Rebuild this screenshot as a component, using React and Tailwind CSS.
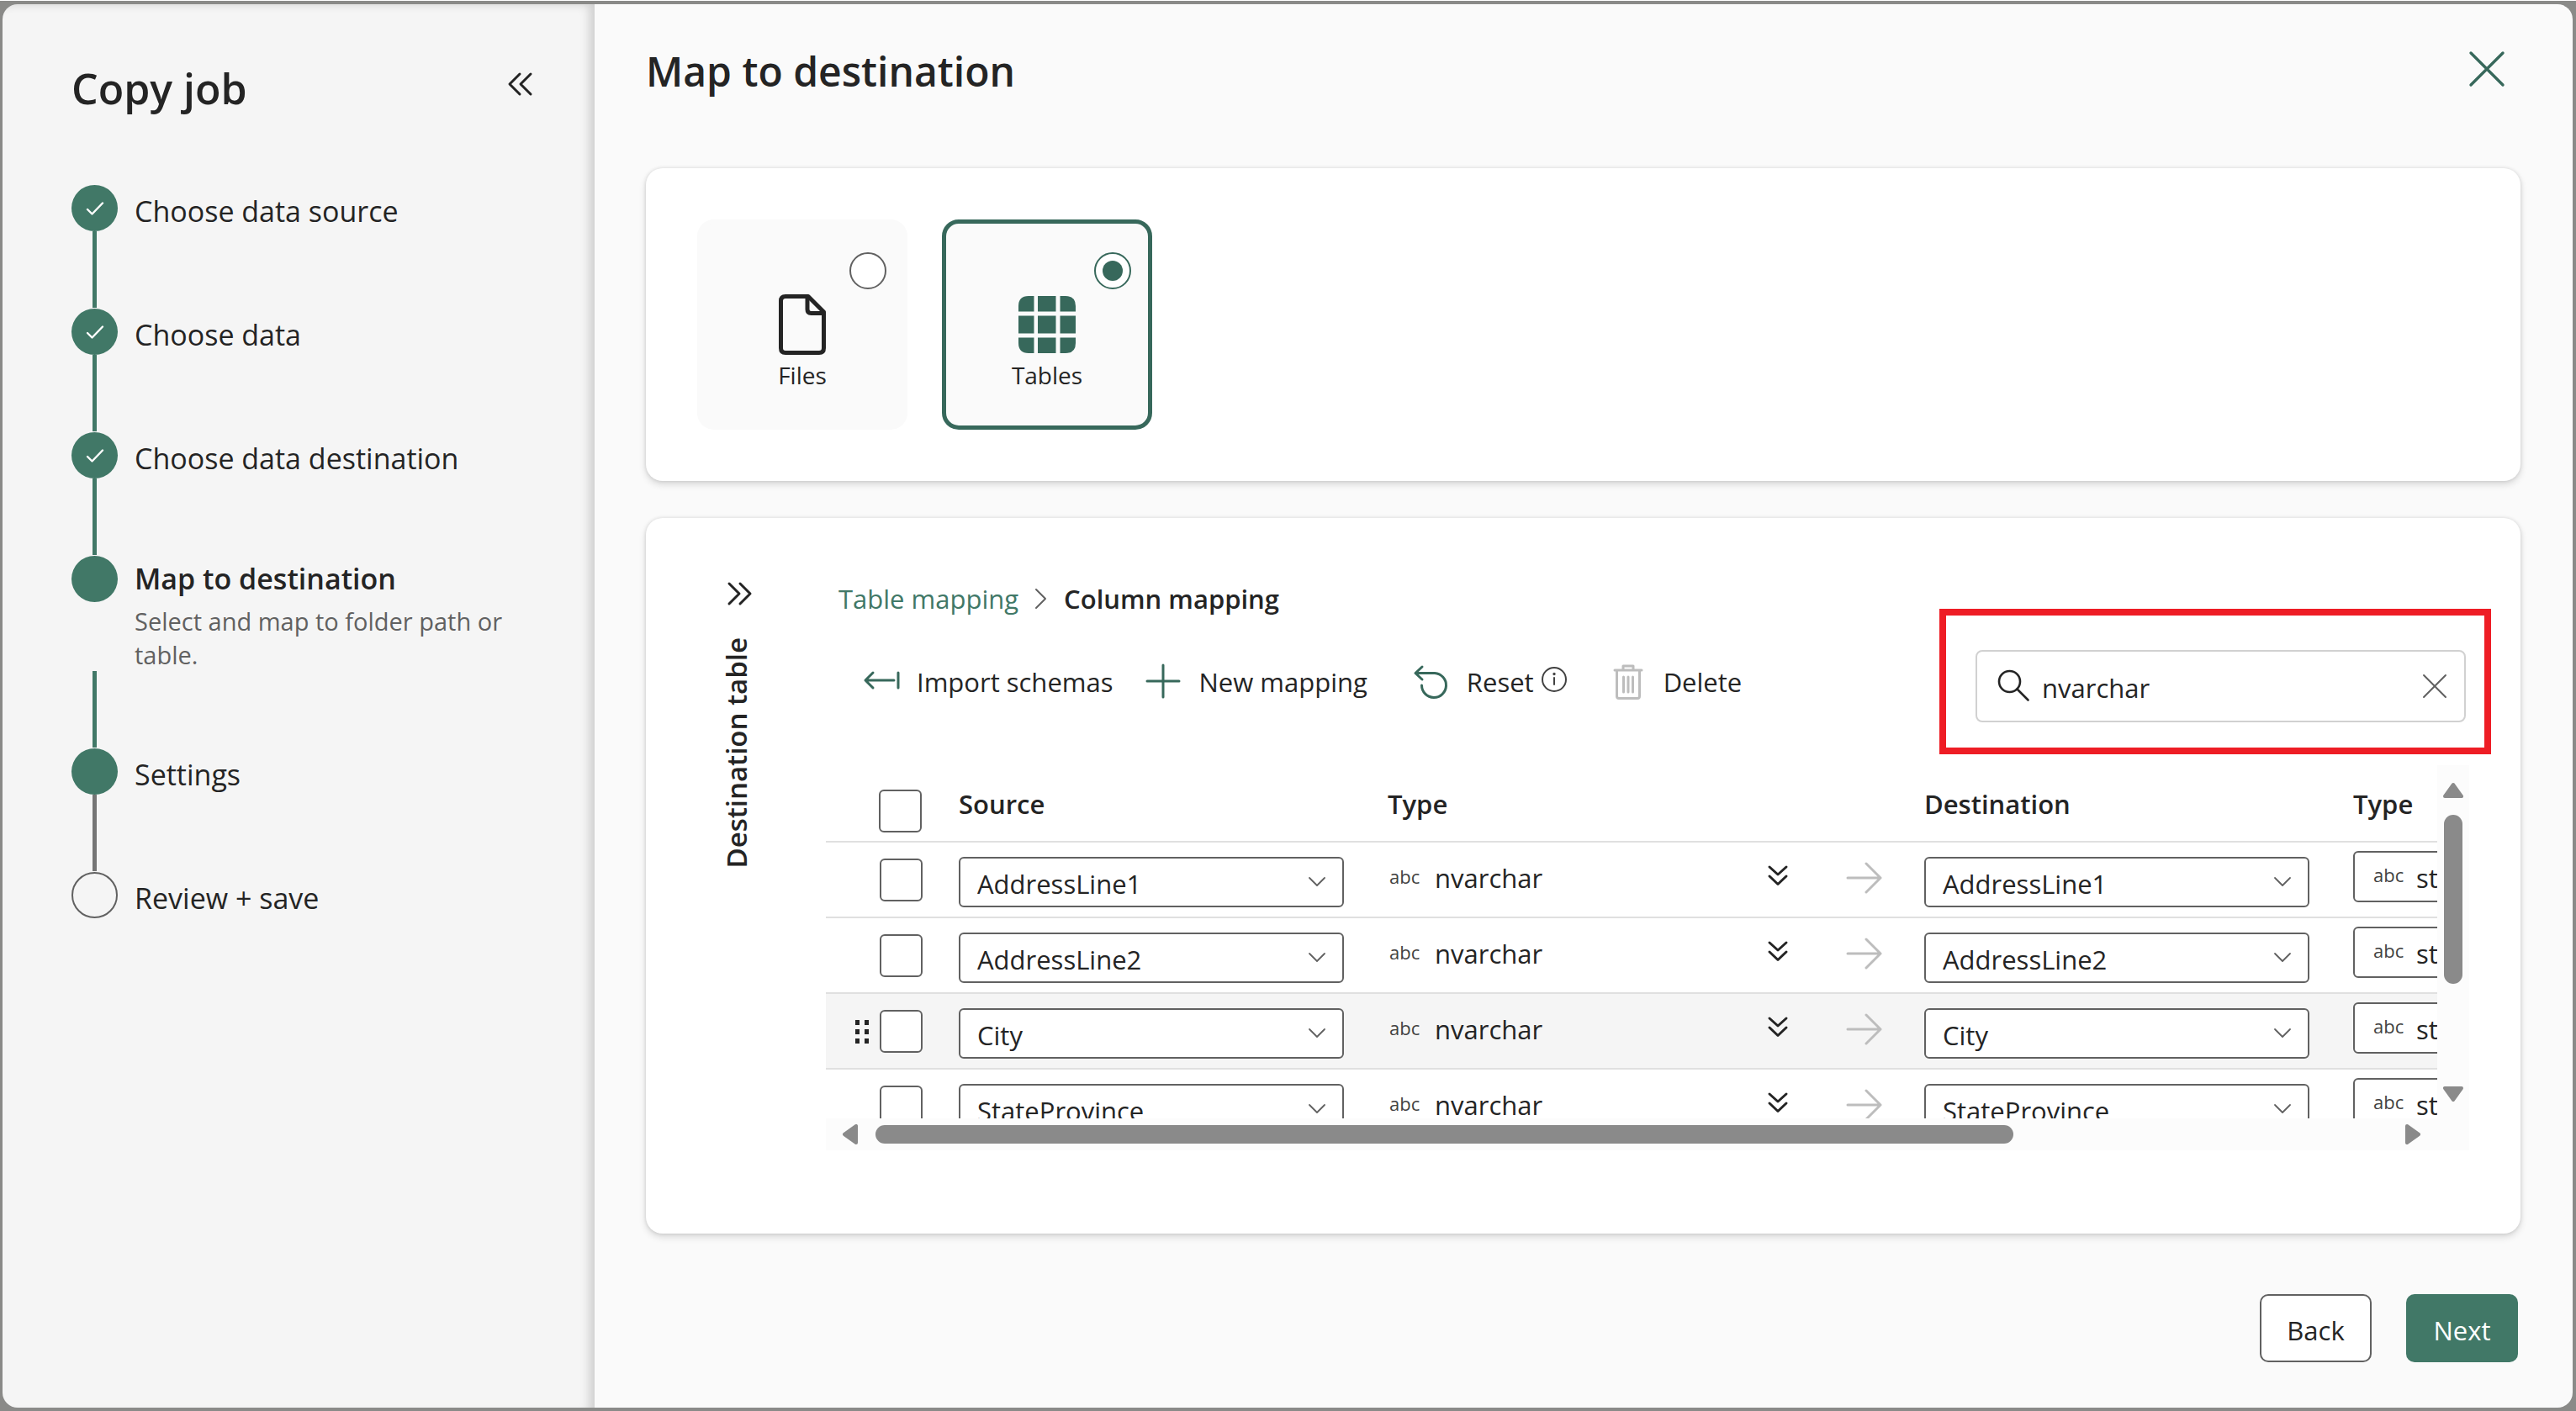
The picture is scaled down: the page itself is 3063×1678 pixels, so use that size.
import { useState } from 'react';

const steps = [
  { label: 'Choose data source', state: 'done' },
  { label: 'Choose data', state: 'done' },
  { label: 'Choose data destination', state: 'done' },
  {
    label: 'Map to destination',
    state: 'current',
    description: 'Select and map to folder path or table.',
  },
  { label: 'Settings', state: 'ready' },
  { label: 'Review + save', state: 'todo' },
];

const columns = ['AddressLine1', 'AddressLine2', 'City', 'StateProvince'];

// Shared wrapper for the line icons
const Icon = ({ children, className, box = '0 0 44 44', width = 3 }) => (
  <svg
    viewBox={box}
    className={className}
    fill="none"
    stroke="currentColor"
    strokeWidth={width}
    strokeLinecap="round"
    strokeLinejoin="round"
    aria-hidden="true"
  >
    {children}
  </svg>
);

const CloseIcon = ({ className, width }) => (
  <Icon className={className} width={width}>
    <path d="M3 3 41 41M41 3 3 41" />
  </Icon>
);

const Step = ({ step, last }) => {
  const filled = step.state !== 'todo';
  const current = step.state === 'current';

  return (
    <li className="flex gap-5" aria-current={current ? 'step' : undefined}>
      <div className="flex shrink-0 flex-col items-center">
        <span
          className={
            filled
              ? 'flex size-[55px] items-center justify-center rounded-full bg-[#417867] text-white'
              : 'size-[55px] rounded-full border-2 border-[#616161]'
          }
        >
          {step.state === 'done' && (
            <Icon className="size-[22px]" box="0 0 22 22" width={2.4}>
              <path d="M2 12 7.500 17.500 20 4.500" />
            </Icon>
          )}
        </span>
        {!last && (
          <span
            className={`mt-auto mb-px h-[91px] w-[5px] ${
              step.state === 'ready' ? 'bg-[#757575]' : 'bg-[#417867]'
            }`}
          />
        )}
      </div>
      {current ? (
        <div className="pb-[91px]">
          <p className="text-[34px] leading-[54px] font-semibold">{step.label}</p>
          <p className="mt-1 max-w-[460px] text-[29px] leading-10 text-[#616161]">
            {step.description}
          </p>
        </div>
      ) : (
        <p className="pb-[85px] text-[34px] leading-[62px]">{step.label}</p>
      )}
    </li>
  );
};

const Sidebar = () => (
  <aside className="w-[704px] shrink-0 rounded-l-[18px] bg-[#f5f5f5] pt-[69px] pr-[72px] pl-[82px] shadow-[inset_-10px_4px_12px_-4px_rgba(0,0,0,0.16)]">
    <div className="flex items-start justify-between">
      <h2 className="text-[50px] leading-[62px] font-semibold">Copy job</h2>
      <button type="button" aria-label="Collapse" className="mt-2.5">
        <Icon className="size-8" box="0 0 32 32">
          <path d="M15 4 3 16 15 28M28 4 16 16 28 28" />
        </Icon>
      </button>
    </div>
    <ol className="mt-[84px]">
      {steps.map((step, i) => (
        <Step key={step.label} step={step} last={i === steps.length - 1} />
      ))}
    </ol>
  </aside>
);

const TargetTile = ({ label, value, selected, onSelect, children }) => (
  <label
    className={`flex size-[250px] flex-col items-center rounded-[20px] border-[5px] bg-[#fafafa] ${
      selected ? 'border-[#37685b]' : 'border-[#fafafa]'
    }`}
  >
    <input
      type="radio"
      name="target"
      value={value}
      checked={selected}
      onChange={() => onSelect(value)}
      className="mt-[34px] mr-5 grid size-11 appearance-none place-content-center self-end rounded-full border-2 border-[#616161] bg-white checked:border-[#37685b] checked:before:size-6 checked:before:rounded-full checked:before:bg-[#37685b]"
    />
    <span className="mt-1.5 text-[#242424]">{children}</span>
    <span className="mt-1 text-[28px] leading-10">{label}</span>
  </label>
);

const FileIcon = () => (
  <Icon className="size-[72px]" box="0 0 72 72" width={5}>
    <path d="M16 2.500H43L61.500 21V64Q61.500 69.500 56 69.500H16Q10.500 69.500 10.500 64V8Q10.500 2.500 16 2.500Z" />
    <path d="M42 3V18Q42 22.500 46.500 22.500H61" />
  </Icon>
);

const GridIcon = () => (
  <svg viewBox="0 0 72 72" className="size-[72px]" fill="#37685b" aria-hidden="true">
    <path d="M2 20.500V14Q2 2 14 2H20.500V20.500ZM25 2H46.500V20.500H25ZM51.500 2H58Q70 2 70 14V20.500H51.500Z" />
    <path d="M2 25.500H20.500V46.500H2ZM25 25.500H46.500V46.500H25ZM51.500 25.500H70V46.500H51.500Z" />
    <path d="M2 51.500H20.500V70H14Q2 70 2 58ZM25 51.500H46.500V70H25ZM51.500 51.500H70V58Q70 70 58 70H51.500Z" />
  </svg>
);

const ToolButton = ({ icon, children, className = '' }) => (
  <button type="button" className={`flex items-center gap-5 ${className}`}>
    {icon}
    {children}
  </button>
);

const Toolbar = () => (
  <div className="flex gap-[38px] pt-4 pl-11 text-[31px] leading-10">
    <ToolButton
      icon={
        <Icon className="size-11 text-[#37685b]">
          <path d="M37 20H3M12 11 3 20 12 29M42 11V29" />
        </Icon>
      }
    >
      Import schemas
    </ToolButton>
    <ToolButton
      icon={
        <Icon className="size-11 text-[#37685b]">
          <path d="M22 2V40M3 21H41" />
        </Icon>
      }
    >
      New mapping
    </ToolButton>
    <div className="ml-4 flex gap-2">
      <ToolButton
        icon={
          <Icon className="size-11 text-[#37685b]">
            <path d="M11 4 3 11.500 11 19M3 11.500H26A14.500 14.500 0 1 1 10.500 26" />
          </Icon>
        }
      >
        Reset
      </ToolButton>
      <button type="button" aria-label="About reset" className="pb-1.5">
        <Icon className="size-8 text-[#424242]" box="0 0 32 32" width={2}>
          <circle cx="16" cy="16" r="14" />
          <path d="M16 14V22" />
          <circle cx="16" cy="9.500" r="0.700" fill="currentColor" />
        </Icon>
      </button>
    </div>
    <ToolButton
      className="ml-3"
      icon={
        <Icon className="size-11 text-[#bdbdbd]">
          <path d="M6 8H38M16 7V3H28V7M8.500 9V39Q8.500 41.500 11 41.500H33Q35.500 41.500 35.500 39V9M16.500 16V34M22 16V34M27.500 16V34" />
        </Icon>
      }
    >
      Delete
    </ToolButton>
  </div>
);

const SearchBox = () => {
  const [query, setQuery] = useState('nvarchar');

  return (
    <div className="relative mr-1 flex h-[86px] w-[583px] shrink-0 items-center rounded-lg border-2 border-[#d1d1d1] bg-white pr-5 pl-[23px]">
      <Icon className="size-10 shrink-0" box="0 0 40 40" width={2.6}>
        <circle cx="15.500" cy="14.500" r="12.500" />
        <path d="M24.500 23.500 37.500 36.500" />
      </Icon>
      <input
        type="text"
        aria-label="Search columns"
        value={query}
        onChange={(e) => setQuery(e.target.value)}
        className="min-w-0 flex-1 pt-1 pl-3.5 text-[31px] leading-10 outline-none"
      />
      <button type="button" aria-label="Clear search" onClick={() => setQuery('')}>
        <CloseIcon className="size-[30px] text-[#616161]" width={3} />
      </button>
      <span className="pointer-events-none absolute -top-[51px] -right-8 -bottom-10 -left-[45px] border-8 border-[#ee1d25]" />
    </div>
  );
};

const Checkbox = ({ label }) => (
  <input
    type="checkbox"
    aria-label={label}
    className="block size-[51px] appearance-none rounded-md border-2 border-[#616161] bg-white checked:bg-[#417867]"
  />
);

const ColumnSelect = ({ label, value }) => (
  <div className="grid h-[60px] w-[458px] items-center">
    <select
      aria-label={label}
      defaultValue={value}
      className="col-start-1 row-start-1 h-full w-full appearance-none rounded-md border-2 border-[#616161] bg-white pt-1 pl-5 text-[31px] leading-10"
    >
      {columns.map((name) => (
        <option key={name}>{name}</option>
      ))}
    </select>
    <Icon
      className="pointer-events-none col-start-1 row-start-1 mr-5 h-4 w-6 justify-self-end text-[#616161]"
      box="0 0 24 16"
      width={1.8}
    >
      <path d="M3 3 12 12 21 3" />
    </Icon>
  </div>
);

const MappingRow = ({ name, hovered }) => (
  <tr className={`align-top *:h-[90px] *:border-b-2 *:border-[#e0e0e0] ${hovered ? 'bg-[#f5f5f5]' : ''}`}>
    <td className="pt-[19px]">
      <div className="flex items-center justify-end pr-[43px]">
        {hovered && (
          <svg viewBox="0 0 18 28" className="mr-3 h-7 w-[18px]" fill="#242424" aria-hidden="true">
            <path d="M1 0H6V6H1ZM12 0H17V6H12ZM1 11H6V17H1ZM12 11H17V17H12ZM1 22H6V28H1ZM12 22H17V28H12Z" />
          </svg>
        )}
        <Checkbox label={`Select ${name}`} />
      </div>
    </td>
    <td className="pt-[17px]">
      <ColumnSelect label={`Source column ${name}`} value={name} />
    </td>
    <td className="pt-[22px]">
      <div className="flex items-center pl-[2px]">
        <span className="w-[54px] pb-1 text-[22px] text-[#424242]">abc</span>
        <span className="text-[31px] leading-10">nvarchar</span>
        <button type="button" aria-label="More type details" className="mr-8 mb-1 ml-auto">
          <Icon className="size-7" box="0 0 28 28">
            <path d="M4 3 14 12 24 3M4 14 14 23.500 24 14" />
          </Icon>
        </button>
      </div>
    </td>
    <td className="pt-5 pl-[34px]">
      <Icon className="size-11 text-[#bdbdbd]">
        <path d="M3 22H42M25 5 42 22 25 39" />
      </Icon>
    </td>
    <td className="pt-[17px]">
      <ColumnSelect label={`Destination column ${name}`} value={name} />
    </td>
    <td className="pt-2.5">
      <button
        type="button"
        className="flex h-[61px] w-[458px] items-center rounded-md border-2 border-[#616161] bg-white pl-[22px]"
      >
        <span className="w-[51px] pb-1 text-left text-[22px] text-[#424242]">abc</span>
        <span className="pt-0.5 text-[31px] leading-10">string</span>
      </button>
    </td>
  </tr>
);

const MappingTable = () => (
  <table className="w-[2426px] table-fixed border-separate border-spacing-0">
    <colgroup>
      <col className="w-[158px]" />
      <col className="w-[510px]" />
      <col className="w-[510px]" />
      <col className="w-[128px]" />
      <col className="w-[510px]" />
      <col className="w-[610px]" />
    </colgroup>
    <thead>
      <tr className="text-left text-[31px] leading-10 *:h-[92px] *:border-b-2 *:border-[#e0e0e0] *:pt-[2px] *:font-semibold">
        <th>
          <div className="flex justify-end pt-4 pr-[44px]">
            <Checkbox label="Select all" />
          </div>
        </th>
        <th>Source</th>
        <th>Type</th>
        <th />
        <th>Destination</th>
        <th>Type</th>
      </tr>
    </thead>
    <tbody>
      {columns.map((name) => (
        <MappingRow key={name} name={name} hovered={name === 'City'} />
      ))}
    </tbody>
  </table>
);

const Arrow = ({ className = '', d }) => (
  <svg
    viewBox="0 0 24 24"
    className={`size-6 shrink-0 ${className}`}
    fill="#8a8a8a"
    stroke="#8a8a8a"
    strokeWidth="4"
    strokeLinejoin="round"
    aria-hidden="true"
  >
    <path d={d} />
  </svg>
);

const ScrollArea = ({ children }) => (
  <div className="mt-[51px]">
    <div className="flex h-[420px]">
      <div className="min-w-0 flex-1 overflow-hidden">{children}</div>
      <div className="flex w-[38px] shrink-0 flex-col items-center bg-[#fcfcfc] pt-[18px] pb-[17px]">
        <Arrow d="M12 5 22 19H2Z" />
        <div className="flex w-[22px] flex-1 flex-col pt-[17px]">
          <div className="h-[201px] rounded-full bg-[#8a8a8a]" />
        </div>
        <Arrow d="M2 5H22L12 19Z" />
      </div>
    </div>
    <div className="flex h-[38px] items-center bg-[#fcfcfc] pr-[55px] pl-[17px]">
      <Arrow d="M5 12 19 2V22Z" />
      <div className="flex-1 pr-3 pl-[18px]">
        <div className="h-[22px] w-3/4 rounded-full bg-[#8a8a8a]" />
      </div>
      <Arrow d="M5 2 19 12 5 22Z" />
    </div>
  </div>
);

const MappingCard = () => (
  <section className="mt-11 flex rounded-[20px] bg-white pt-[74px] pr-[61px] pb-[99px] pl-[95px] shadow-[0_4px_8px_rgba(0,0,0,0.14),0_0_4px_rgba(0,0,0,0.12)]">
    <div className="mr-[87px] flex w-8 shrink-0 flex-col items-start">
      <button type="button" aria-label="Expand destination table">
        <Icon className="size-8" box="0 0 32 32">
          <path d="M4 4 16 16 4 28M17 4 29 16 17 28" />
        </Icon>
      </button>
      <h3 className="mt-9 rotate-180 text-[33px] leading-[26px] font-semibold whitespace-nowrap [writing-mode:vertical-rl]">
        Destination table
      </h3>
    </div>
    <div className="min-w-0 flex-1 pt-0.5">
      <nav className="flex items-center pl-[15px] text-[31px] leading-10">
        <a href="#tables" className="text-[#417867]">
          Table mapping
        </a>
        <Icon className="mx-[17px] h-7 w-5 text-[#616161]" box="0 0 20 28" width={2}>
          <path d="M4 3 15 14 4 25" />
        </Icon>
        <span className="font-semibold">Column mapping</span>
      </nav>
      <div className="mt-[41px] flex items-start justify-between">
        <Toolbar />
        <SearchBox />
      </div>
      <ScrollArea>
        <MappingTable />
      </ScrollArea>
    </div>
  </section>
);

const App = () => {
  const [target, setTarget] = useState('tables');

  return (
    <div className="flex min-h-screen border-t border-white bg-[#8a8a88] pt-1 pr-1 pb-1 pl-[3px] font-['Open_Sans','Noto_Sans',sans-serif] text-[#242424]">
      <Sidebar />
      <main className="min-w-0 flex-1 rounded-r-[18px] bg-[#fafafa] pt-[49px] pr-[62px] pl-[61px]">
        <header className="flex items-start justify-between">
          <h1 className="text-[48px] leading-[62px] font-semibold">Map to destination</h1>
          <button type="button" aria-label="Close" className="mt-1.5 mr-[18px]">
            <CloseIcon className="size-11 text-[#37685b]" width={3.4} />
          </button>
        </header>

        <section className="mt-[84px] flex gap-[41px] rounded-[20px] bg-white p-[61px] shadow-[0_4px_8px_rgba(0,0,0,0.14),0_0_4px_rgba(0,0,0,0.12)]">
          <TargetTile label="Files" value="files" selected={target === 'files'} onSelect={setTarget}>
            <FileIcon />
          </TargetTile>
          <TargetTile label="Tables" value="tables" selected={target === 'tables'} onSelect={setTarget}>
            <GridIcon />
          </TargetTile>
        </section>

        <MappingCard />

        <footer className="mt-[72px] flex justify-end gap-[41px] pr-[3px] text-[31px] leading-10">
          <button
            type="button"
            className="h-[81px] w-[133px] rounded-[10px] border-2 border-[#616161] bg-white pt-1"
          >
            Back
          </button>
          <button type="button" className="h-[81px] w-[133px] rounded-[10px] bg-[#417867] pt-1 text-white">
            Next
          </button>
        </footer>
      </main>
    </div>
  );
};

export default App;
